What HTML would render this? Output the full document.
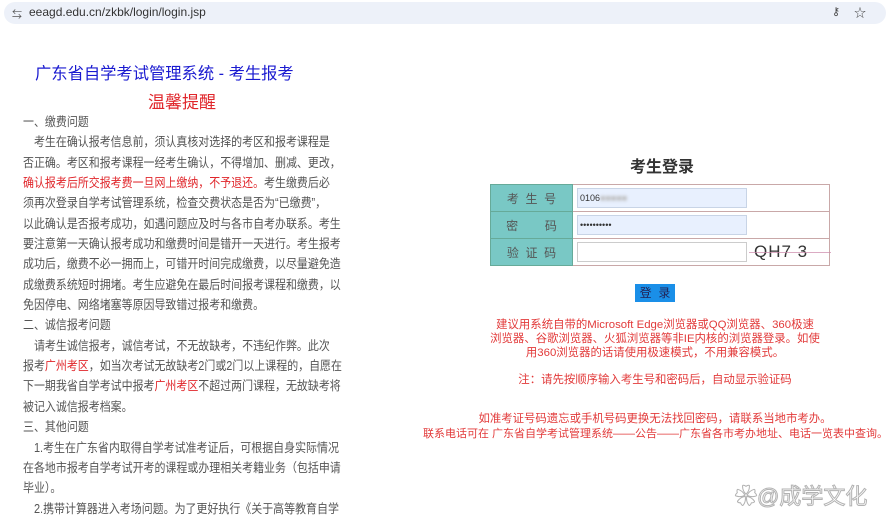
<!DOCTYPE html>
<html><head><meta charset="utf-8"><style>
*{margin:0;padding:0;box-sizing:border-box}
body{width:890px;height:522px;overflow:hidden;background:#fff;font-family:"Liberation Sans","Noto Sans CJK SC",sans-serif;position:relative}
.bar{position:absolute;left:4px;top:2px;width:882px;height:22px;background:#edf1f9;border-radius:11px}
.url{position:absolute;left:29px;top:5px;font-size:12px;color:#333}
.abs{position:absolute;white-space:nowrap}
.left{position:absolute;left:23px;top:112px;font-size:12.6px;line-height:20.35px;color:#555;white-space:nowrap;transform:scaleX(0.87);transform-origin:0 0}
.left div{height:20.35px}
.r{color:#e0262b}
table{position:absolute;left:490px;top:184px;width:340px;border-collapse:collapse}
td{border:1px solid #c9a8a8;height:27px}
td.l{background:#79c8c5;width:82px;color:#555;font-size:12px;text-align:center;border-color:#6a9;}
.in{position:absolute;left:577px;width:170px;height:20px;background:#e8f0fe;border:1px solid #c8d4e6;font-size:9px;color:#333;padding:4px 2px}
.red{position:absolute;color:#e23a3a;font-size:11.4px;text-align:center;line-height:14px;white-space:nowrap}
</style></head><body>
<div class="bar"></div>
<div class="abs" style="left:12px;top:6px;font-size:10px;color:#555">⇆</div>
<div class="url">eeagd.edu.cn/zkbk/login/login.jsp</div>
<div class="abs" style="left:832px;top:5px;font-size:11px;color:#444">⚷</div>
<div class="abs" style="left:854px;top:4px;font-size:12px;color:#444">☆</div>
<div class="abs" style="left:35px;top:60px;font-size:16.3px;color:#1a1ad0">广东省自学考试管理系统 - 考生报考</div>
<div class="abs" style="left:148px;top:88px;font-size:17px;color:#e0262b">温馨提醒</div>
<div class="left">
<div>一、缴费问题</div>
<div>&#12288;考生在确认报考信息前，须认真核对选择的考区和报考课程是</div>
<div>否正确。考区和报考课程一经考生确认，不得增加、删减、更改，</div>
<div><span class="r">确认报考后所交报考费一旦网上缴纳，不予退还。</span>考生缴费后必</div>
<div>须再次登录自学考试管理系统，检查交费状态是否为“已缴费”，</div>
<div>以此确认是否报考成功，如遇问题应及时与各市自考办联系。考生</div>
<div>要注意第一天确认报考成功和缴费时间是错开一天进行。考生报考</div>
<div>成功后，缴费不必一拥而上，可错开时间完成缴费，以尽量避免造</div>
<div>成缴费系统短时拥堵。考生应避免在最后时间报考课程和缴费，以</div>
<div>免因停电、网络堵塞等原因导致错过报考和缴费。</div>
<div>二、诚信报考问题</div>
<div>&#12288;请考生诚信报考，诚信考试，不无故缺考，不违纪作弊。此次</div>
<div>报考<span class="r">广州考区</span>，如当次考试无故缺考2门或2门以上课程的，自愿在</div>
<div>下一期我省自学考试中报考<span class="r">广州考区</span>不超过两门课程，无故缺考将</div>
<div>被记入诚信报考档案。</div>
<div>三、其他问题</div>
<div>&#12288;1.考生在广东省内取得自学考试准考证后，可根据自身实际情况</div>
<div>在各地市报考自学考试开考的课程或办理相关考籍业务（包括申请</div>
<div>毕业）。</div>
<div>&#12288;2.携带计算器进入考场问题。为了更好执行《关于高等教育自学</div>
</div>
<div class="abs" style="left:630px;top:153px;font-size:16px;font-weight:bold;color:#333">考生登录</div>
<table>
<tr><td class="l">考&nbsp;&nbsp;生&nbsp;&nbsp;号</td><td></td></tr>
<tr><td class="l">密&nbsp;&nbsp;&nbsp;&nbsp;&nbsp;&nbsp;&nbsp;&nbsp;码</td><td></td></tr>
<tr><td class="l">验&nbsp;&nbsp;证&nbsp;&nbsp;码</td><td></td></tr>
</table>
<div class="in" style="top:188px">0106<span style="color:#bbb;filter:blur(1.5px)">■■■■■</span></div>
<div class="in" style="top:215px">••••••••••</div>
<div class="in" style="top:242px;background:#fff;border-color:#ccc"></div>
<div class="abs" style="left:754px;top:242px;font-size:17px;color:#333;letter-spacing:1px">QH7 3</div>
<div class="abs" style="left:749px;top:252px;width:82px;height:1px;background:#c8a;opacity:.7"></div>
<div class="abs" style="left:635px;top:284px;width:40px;height:18px;background:#1a8fe8;color:#225;font-size:12px;text-align:center;line-height:18px">登&nbsp;&nbsp;录</div>
<div class="red" style="left:490px;top:318px;width:330px">建议用系统自带的Microsoft Edge浏览器或QQ浏览器、360极速<br>浏览器、谷歌浏览器、火狐浏览器等非IE内核的浏览器登录。如使<br>用360浏览器的话请使用极速模式，不用兼容模式。</div>
<div class="red" style="left:410px;top:373px;width:490px">注：请先按顺序输入考生号和密码后，自动显示验证码</div>
<div class="red" style="left:410px;top:412px;width:490px">如准考证号码遗忘或手机号码更换无法找回密码，请联系当地市考办。</div>
<div class="red" style="left:423px;top:427px;width:460px;font-size:11px">联系电话可在 广东省自学考试管理系统——公告——广东省各市考办地址、电话一览表中查询。</div>
<div class="abs" style="left:735px;top:479px;font-size:22px;color:#fff;-webkit-text-stroke:1px #aaa;opacity:.9">✿@成学文化</div>
</body></html>
